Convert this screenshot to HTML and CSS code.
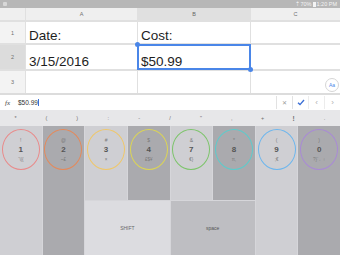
FILE: index.html
```html
<!DOCTYPE html>
<html>
<head>
<meta charset="utf-8">
<link rel="stylesheet" href="styles.css">
</head>
<body>
<div class="status">
  <span class="st-icon"></span>
  <span class="st-right"><span class="st-sig">⇡</span> 70% <span class="batt"></span> 1:20 PM</span>
</div>
<div class="sheet">
  <div class="corner"></div>
  <div class="colh">A</div>
  <div class="colh sel">B</div>
  <div class="colh">C</div>

  <div class="rowh">1</div>
  <div class="cell">Date:</div>
  <div class="cell">Cost:</div>
  <div class="cell"></div>

  <div class="rowh sel">2</div>
  <div class="cell">3/15/2016</div>
  <div class="cell active">$50.99<span class="dot tl"></span><span class="dot br"></span></div>
  <div class="cell"></div>

  <div class="rowh">3</div>
  <div class="cell"></div>
  <div class="cell"></div>
  <div class="cell"></div>

  <div class="aa">Aa</div>
</div>
<div class="formula">
  <span class="fx">fx</span>
  <span class="fval">$50.99<span class="caret"></span></span>
  <span class="fbtn cancel">✕</span>
  <span class="fbtn ok"><svg width="8" height="7" viewBox="0 0 8 7"><path d="M1 3.8 L3 5.6 L7 1" fill="none" stroke="#3b6fd6" stroke-width="1.4"/></svg></span>
  <span class="fbtn nav">‹</span>
  <span class="fbtn nav">›</span>
</div>
<div class="symbols">
  <span>*</span><span>(</span><span>)</span><span>:</span><span>-</span><span>/</span><span>"</span><span>,</span><span>+</span><span class="bold">!</span><span>.</span>
</div>
<div class="keys">
  <div class="key light tall"><div class="ring c1"><span class="t">!</span><span class="d">1</span><span class="b">`\|{</span></div></div>
  <div class="key dark tall"><div class="ring c2"><span class="t">@</span><span class="d">2</span><span class="b">~£</span></div></div>
  <div class="key light"><div class="ring c3"><span class="t">#</span><span class="d">3</span><span class="b">×</span></div></div>
  <div class="key dark"><div class="ring c4"><span class="t">$</span><span class="d">4</span><span class="b">£$¥</span></div></div>
  <div class="key light"><div class="ring c5"><span class="t">&amp;</span><span class="d">7</span><span class="b">€}</span></div></div>
  <div class="key dark"><div class="ring c6"><span class="t">*</span><span class="d">8</span><span class="b">π,</span></div></div>
  <div class="key light tall"><div class="ring c7"><span class="t">(</span><span class="d">9</span><span class="b">;€</span></div></div>
  <div class="key dark tall"><div class="ring c8"><span class="t">)</span><span class="d">0</span><span class="b">?}`←↑</span></div></div>
  <div class="key shift">SHIFT</div>
  <div class="key space">space</div>
</div>
</body>
</html>
```
FILE: styles.css
```css
* { box-sizing: border-box; }
html, body { margin: 0; padding: 0; }
body {
  width: 340px;
  height: 255px;
  overflow: hidden;
  font-family: "Liberation Sans", Arial, sans-serif;
  background: #fff;
}
.status {
  height: 8px;
  background: #b7b7b7;
  display: flex;
  align-items: center;
  justify-content: space-between;
  padding: 0 3px;
}
.st-icon {
  width: 4px;
  height: 4px;
  background: #d8d8d8;
  border-radius: 1px;
}
.st-right {
  font-size: 5.5px;
  color: #f4f4f4;
  display: flex;
  align-items: center;
  gap: 1px;
  line-height: 8px;
}
.batt {
  display: inline-block;
  width: 3px;
  height: 5px;
  background: #f4f4f4;
}
.sheet {
  position: relative;
  display: grid;
  grid-template-columns: 25px 111px 112px 1fr;
  grid-template-rows: 12px 21px 24px 22px;
  gap: 2px 1px;
  background: #e0e0e0;
  border-bottom: 2px solid #dcdcdc;
}
.corner { background: #efefef; }
.colh {
  background: #efefef;
  font-size: 5.5px;
  color: #707070;
  display: flex;
  align-items: center;
  justify-content: center;
}
.colh.sel { background: #e0e0e0; color: #666; }
.rowh {
  background: #f3f3f3;
  font-size: 5.5px;
  color: #707070;
  display: flex;
  align-items: center;
  justify-content: center;
}
.rowh.sel { background: #dcdcdc; }
.cell {
  background: #fff;
  font-size: 13.5px;
  line-height: 14px;
  color: #1e1e1e;
  display: flex;
  align-items: flex-end;
  padding-left: 3px;
}
.cell.active {
  position: relative;
  z-index: 1;
  outline: 2px solid #4a86e8;
  outline-offset: -1px;
}
.dot {
  position: absolute;
  width: 5px;
  height: 5px;
  border-radius: 50%;
  background: #4a86e8;
}
.dot.tl { left: -3px; top: -3px; }
.dot.br { right: -3px; bottom: -3px; }
.aa {
  position: absolute;
  left: 325px;
  top: 70px;
  width: 14px;
  height: 14px;
  border-radius: 50%;
  background: #fff;
  border: 1px solid #d6d6d6;
  color: #4a86e8;
  font-size: 5px;
  display: flex;
  align-items: center;
  justify-content: center;
  z-index: 2;
}
.formula {
  height: 15px;
  background: #fff;
  display: flex;
  align-items: center;
}
.fx {
  font-family: "Liberation Serif", serif;
  font-style: italic;
  font-size: 7px;
  color: #444;
  width: 18px;
  padding-left: 5px;
}
.fval {
  flex: 1;
  font-size: 6.5px;
  color: #333;
  display: flex;
  align-items: center;
}
.caret {
  display: inline-block;
  width: 1px;
  height: 7px;
  background: #3b6fd6;
}
.fbtn {
  width: 16px;
  height: 13px;
  border-left: 1px solid #e2e2e2;
  display: flex;
  align-items: center;
  justify-content: center;
  font-size: 6px;
  color: #8a8a8a;
}
.fbtn.cancel { color: #9a9a9a; }
.fbtn.nav { font-size: 8px; color: #b0b0b0; border-left-color: #ececec; }
.symbols {
  height: 16px;
  background: #e7e7e9;
  display: grid;
  grid-template-columns: repeat(11, 1fr);
  align-items: center;
  justify-items: center;
  font-size: 5.5px;
  color: #6f6f6f;
}
.symbols .bold { font-weight: bold; font-size: 6.5px; }
.keys {
  height: 129px;
  display: grid;
  grid-template-columns: repeat(8, 1fr);
  grid-template-rows: 74px 1fr;
  gap: 1px;
  background: #d6d6da;
}
.key {
  display: flex;
  justify-content: center;
  align-items: flex-start;
  padding-top: 3px;
}
.key.light { background: #cfcfd3; }
.key.dark { background: #aaaaae; }
.key.tall { grid-row: span 2; }
.key.shift {
  grid-column: 3 / span 2;
  background: #dcdce0;
  align-items: center;
  padding-top: 0;
  font-size: 5px;
  color: #6a6a6a;
}
.key.space {
  grid-column: 5 / span 2;
  background: #bebec2;
  align-items: center;
  padding-top: 0;
  font-size: 5px;
  color: #555;
}
.ring {
  width: 38px;
  height: 41px;
  border-radius: 50%;
  border: 1px solid;
  display: flex;
  flex-direction: column;
  align-items: center;
  justify-content: center;
  gap: 2px;
  color: #666;
}
.ring .t { font-size: 5px; color: #7a7a7a; line-height: 6px; }
.ring .d { font-size: 8px; font-weight: bold; color: #555; line-height: 10px; }
.ring .b { font-size: 4.5px; color: #7a7a7a; line-height: 6px; }
.c1 { border-color: #e98a8a; }
.c2 { border-color: #e5895a; }
.c3 { border-color: #efc76a; }
.c4 { border-color: #dcd555; }
.c5 { border-color: #7cc46a; }
.c6 { border-color: #5ccccc; }
.c7 { border-color: #6cb6ee; }
.c8 { border-color: #a98ad6; }
```
